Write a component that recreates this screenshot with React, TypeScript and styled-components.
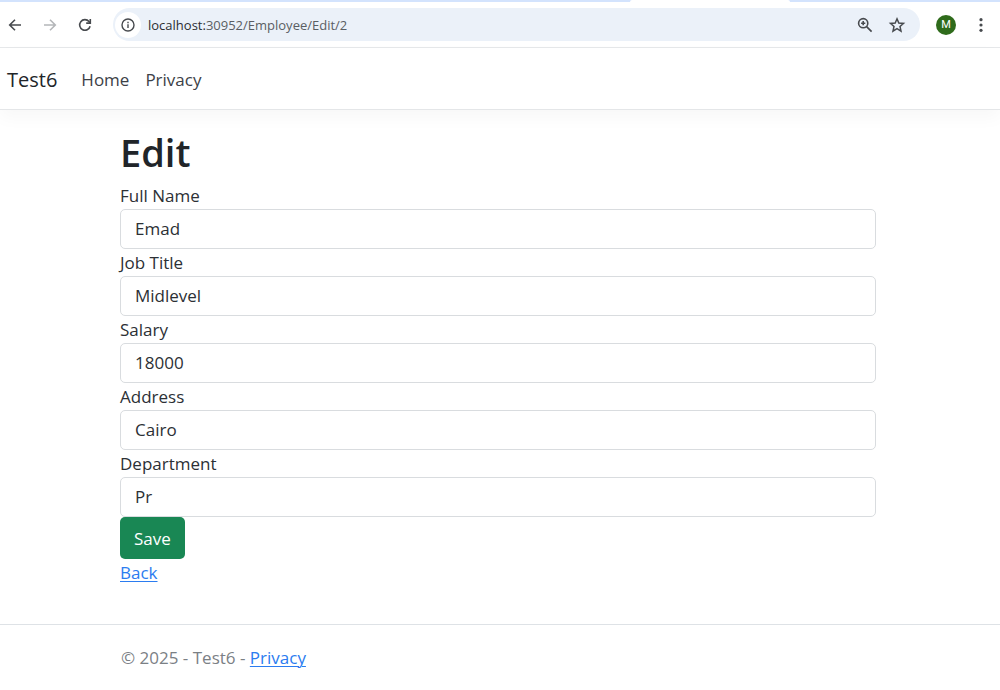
import React from "react";
import styled, { createGlobalStyle } from "styled-components";

const GlobalStyle = createGlobalStyle`
  *, *::before, *::after { box-sizing: border-box; }
  body {
    margin: 0;
    background: #fff;
    color: #2c3035;
    font-family: "Segoe UI", "Open Sans", "Noto Sans", sans-serif;
    font-size: 17px;
    line-height: 27px;
  }
`;

const TabStrip = styled.div`
  display: flex;
  height: 2px;
  padding-left: 63%;
  background: #d3e3fd;
`;

const ActiveTab = styled.div`
  width: 160px;
  background: #fff;
  border-radius: 4px 4px 0 0;
`;

const Toolbar = styled.div`
  display: flex;
  align-items: center;
  height: 46px;
  padding: 0 10px 0 6px;
  border-bottom: 1px solid #e6e8ea;
`;

const ToolButton = styled.button<{ $muted?: boolean }>`
  display: flex;
  align-items: center;
  justify-content: center;
  flex: none;
  width: 18px;
  height: 18px;
  padding: 0;
  border: 0;
  background: none;
  color: ${(p) => (p.$muted ? "#b4b6b9" : "#474a4e")};
`;

const History = styled.div`
  display: flex;
  gap: 17px;
  margin-right: 19px;
`;

const AddressBar = styled.div`
  display: flex;
  flex: 1;
  align-items: center;
  height: 33px;
  padding: 0 14px 0 2px;
  border-radius: 17px;
  background: #ebf1f9;
`;

const SiteInfo = styled.button`
  display: flex;
  align-items: center;
  justify-content: center;
  flex: none;
  width: 26px;
  height: 26px;
  margin-right: 7px;
  padding: 0;
  border: 0;
  border-radius: 50%;
  background: #fff;
  color: #474a4e;
`;

const Url = styled.div`
  flex: 1;
  color: #5a5e63;
  font-size: 13px;
  line-height: 18px;
`;

const Host = styled.span`
  color: #2b2e32;
`;

const BarActions = styled.div`
  display: flex;
  gap: 14px;
`;

const Avatar = styled.button`
  display: flex;
  align-items: center;
  justify-content: center;
  width: 20px;
  height: 20px;
  margin: 0 16px;
  padding: 1px 0 0;
  border: 0;
  border-radius: 50%;
  background: #2f6b1b;
  color: #fff;
  font-family: Roboto, sans-serif;
  font-size: 11px;
  line-height: 18px;
`;

const Navbar = styled.nav`
  display: flex;
  align-items: center;
  gap: 16px;
  height: 62px;
  padding: 1px 7px 0;
  border-bottom: 1px solid #e4e6e8;
  box-shadow: 0 8px 16px rgba(0, 0, 0, 0.03);
`;

const NavLink = styled.a`
  color: #3c4147;
  text-decoration: none;
`;

const Brand = styled(NavLink)`
  margin-right: 8px;
  color: #212529;
  font-size: 20px;
`;

const Main = styled.main`
  padding: 18px 124px 38px 120px;
`;

const Title = styled.h1`
  margin: 0 0 6px;
  color: #212529;
  font-size: 38px;
  font-weight: 600;
  line-height: 48px;
`;

const Field = styled.div`
  display: flex;
  flex-direction: column;
`;

const Label = styled.label`
  line-height: 27px;
`;

const Input = styled.input`
  width: 100%;
  height: 40px;
  padding: 0 14px 1px;
  border: 1px solid #d9dcdf;
  border-radius: 5px;
  background: #fff;
  color: inherit;
  font: inherit;
`;

const SaveButton = styled.button`
  display: block;
  height: 42px;
  padding: 0 14px;
  border: 0;
  border-radius: 5px;
  background: #198754;
  color: #fff;
  font: inherit;
`;

const Link = styled.a`
  color: #2b7cf0;
  text-decoration: underline;
  text-underline-offset: 2px;
  text-decoration-thickness: 1px;
`;

const Footer = styled.footer`
  padding: 19px 124px 18px 121px;
  border-top: 1px solid #dee2e6;
  color: #7b8085;
`;

const fields = [
  { id: "fullName", label: "Full Name", value: "Emad" },
  { id: "jobTitle", label: "Job Title", value: "Midlevel" },
  { id: "salary", label: "Salary", value: "18000" },
  { id: "address", label: "Address", value: "Cairo" },
  { id: "department", label: "Department", value: "Pr" },
];

const BackIcon = () => (
  <svg width="18" height="18" viewBox="0 0 18 18" fill="none" stroke="currentColor" strokeWidth="1.6">
    <path d="M15 9H4M9 3.7 3.7 9 9 14.3" />
  </svg>
);

const ForwardIcon = () => (
  <svg width="18" height="18" viewBox="0 0 18 18" fill="none" stroke="currentColor" strokeWidth="1.6">
    <path d="M3 9h11M9 3.7 14.3 9 9 14.3" />
  </svg>
);

const ReloadIcon = () => (
  <svg width="18" height="18" viewBox="0 0 18 18" fill="none" stroke="currentColor" strokeWidth="1.6">
    <path d="M14.1 10.2A5.3 5.3 0 1 1 13 5.5l1.2 1.3" />
    <path d="M14.3 3v4.1h-4.1" />
  </svg>
);

const InfoIcon = () => (
  <svg width="16" height="16" viewBox="0 0 16 16" fill="none" stroke="currentColor" strokeWidth="1.4">
    <circle cx="8" cy="8" r="6" />
    <path d="M8 7.3v3.6M8 4.8v1.5" />
  </svg>
);

const ZoomIcon = () => (
  <svg width="18" height="18" viewBox="0 0 18 18" fill="none" stroke="currentColor" strokeWidth="1.6">
    <circle cx="7.2" cy="7.2" r="4.6" />
    <path d="m10.6 10.6 5 5M7.2 5.1v4.2M5.1 7.2h4.2" />
  </svg>
);

const StarIcon = () => (
  <svg width="18" height="18" viewBox="0 0 18 18" fill="none" stroke="currentColor" strokeWidth="1.5">
    <path d="m9 2.8 1.8 4.2 4.7.4-3.5 3.1 1 4.6-4-2.4-4 2.4 1-4.6-3.5-3.1 4.7-.4z" />
  </svg>
);

const MenuIcon = () => (
  <svg width="18" height="18" viewBox="0 0 18 18" fill="currentColor">
    <circle cx="9" cy="3.7" r="1.6" />
    <circle cx="9" cy="9" r="1.6" />
    <circle cx="9" cy="14.3" r="1.6" />
  </svg>
);

export default function App() {
  return (
    <>
      <GlobalStyle />
      <TabStrip>
        <ActiveTab />
      </TabStrip>
      <Toolbar>
        <History>
          <ToolButton aria-label="Back"><BackIcon /></ToolButton>
          <ToolButton aria-label="Forward" $muted><ForwardIcon /></ToolButton>
          <ToolButton aria-label="Reload"><ReloadIcon /></ToolButton>
        </History>
        <AddressBar>
          <SiteInfo aria-label="Site information"><InfoIcon /></SiteInfo>
          <Url><Host>localhost:</Host>30952/Employee/Edit/2</Url>
          <BarActions>
            <ToolButton aria-label="Zoom"><ZoomIcon /></ToolButton>
            <ToolButton aria-label="Bookmark"><StarIcon /></ToolButton>
          </BarActions>
        </AddressBar>
        <Avatar>M</Avatar>
        <ToolButton aria-label="Menu"><MenuIcon /></ToolButton>
      </Toolbar>
      <Navbar>
        <Brand href="#">Test6</Brand>
        <NavLink href="#">Home</NavLink>
        <NavLink href="#">Privacy</NavLink>
      </Navbar>
      <Main>
        <Title>Edit</Title>
        <form onSubmit={(e) => e.preventDefault()}>
          {fields.map((f) => (
            <Field key={f.id}>
              <Label htmlFor={f.id}>{f.label}</Label>
              <Input id={f.id} defaultValue={f.value} />
            </Field>
          ))}
          <SaveButton type="submit">Save</SaveButton>
        </form>
        <Link href="#">Back</Link>
      </Main>
      <Footer>
        © 2025 - Test6 - <Link href="#">Privacy</Link>
      </Footer>
    </>
  );
}
